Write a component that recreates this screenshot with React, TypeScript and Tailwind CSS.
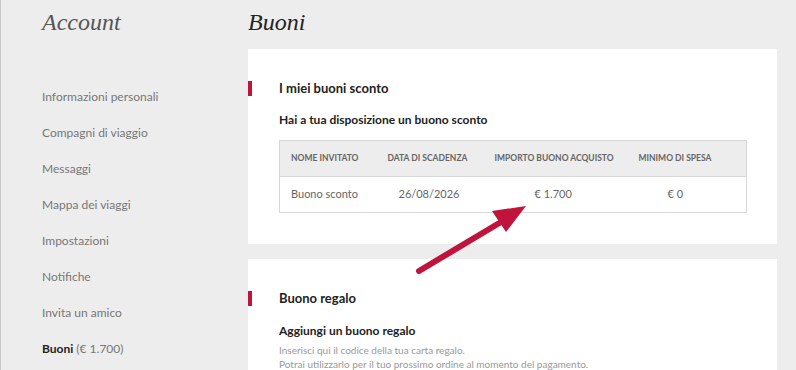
const navItems = [
  'Informazioni personali',
  'Compagni di viaggio',
  'Messaggi',
  'Mappa dei viaggi',
  'Impostazioni',
  'Notifiche',
  'Invita un amico',
]

const sans = { fontFamily: 'Lato, "Open Sans", sans-serif' }

function SectionTitle({ children }: { children: React.ReactNode }) {
  return (
    <div className="flex items-center h-[15px]">
      <span className="w-[4px] h-[15px] bg-[#c0143c]" />
      <h2 className="ml-[27px] text-[13px] font-bold text-[#222]">{children}</h2>
    </div>
  )
}

export default function App() {
  return (
    <div
      className="relative w-[796px] h-[370px] overflow-hidden bg-[#ededed] border-l border-[#c8c8c8] flex"
      style={sans}
    >
      <aside className="w-[247px] shrink-0 pl-[41px]">
        <h1 className="mt-[7px] text-[24px] italic text-[#555] font-['Liberation_Serif',serif] leading-[30px]">
          Account
        </h1>
        <nav className="mt-[51px] flex flex-col">
          {navItems.map((item) => (
            <a key={item} className="h-[36px] leading-[18px] text-[12px] text-[#777]">
              {item}
            </a>
          ))}
          <a className="h-[36px] leading-[18px] text-[12px] text-[#777]">
            <span className="font-bold text-[#222]">Buoni</span> (€ 1.700)
          </a>
        </nav>
      </aside>

      <main className="w-[529px] shrink-0">
        <h1 className="mt-[7px] text-[24px] italic text-[#222] font-['Liberation_Serif',serif] leading-[30px]">
          Buoni
        </h1>

        <section className="mt-[12px] h-[195px] bg-white pt-[32px]">
          <SectionTitle>I miei buoni sconto</SectionTitle>
          <div className="pl-[31px] pr-[30px]">
            <p className="mt-[15px] text-[12px] font-bold text-[#222]">Hai a tua disposizione un buono sconto</p>
            <table className="mt-[11px] w-full border border-[#d8d8d8] border-collapse text-left">
              <thead>
                <tr className="h-[36px] bg-[#ededed] text-[8.5px] font-bold uppercase text-[#666] border-b border-[#d8d8d8]">
                  <th className="pl-[11px] w-[108px] font-bold">Nome invitato</th>
                  <th className="w-[107px] font-bold">Data di scadenza</th>
                  <th className="w-[144px] font-bold">Importo buono acquisto</th>
                  <th className="font-bold">Minimo di spesa</th>
                </tr>
              </thead>
              <tbody>
                <tr className="h-[36px] text-[11px] text-[#666]">
                  <td className="pl-[11px]">Buono sconto</td>
                  <td className="pl-[11px]">26/08/2026</td>
                  <td className="pl-[40px]">€ 1.700</td>
                  <td className="pl-[29px]">€ 0</td>
                </tr>
              </tbody>
            </table>
          </div>
        </section>

        <section className="mt-[15px] h-[140px] bg-white pt-[32px]">
          <SectionTitle>Buono regalo</SectionTitle>
          <div className="pl-[31px]">
            <p className="mt-[16px] text-[12px] font-bold text-[#222]">Aggiungi un buono regalo</p>
            <p className="mt-[3px] text-[10px] leading-[14px] text-[#999]">
              Inserisci qui il codice della tua carta regalo.
              <br />
              Potrai utilizzarlo per il tuo prossimo ordine al momento del pagamento.
            </p>
          </div>
        </section>
      </main>

      <svg className="absolute left-0 top-0 pointer-events-none" width="796" height="370">
        <line x1="418" y1="271" x2="500" y2="222" stroke="#c0143c" strokeWidth="6" strokeLinecap="round" />
        <polygon points="525,206 491,211 505,232" fill="#c0143c" />
      </svg>
    </div>
  )
}
